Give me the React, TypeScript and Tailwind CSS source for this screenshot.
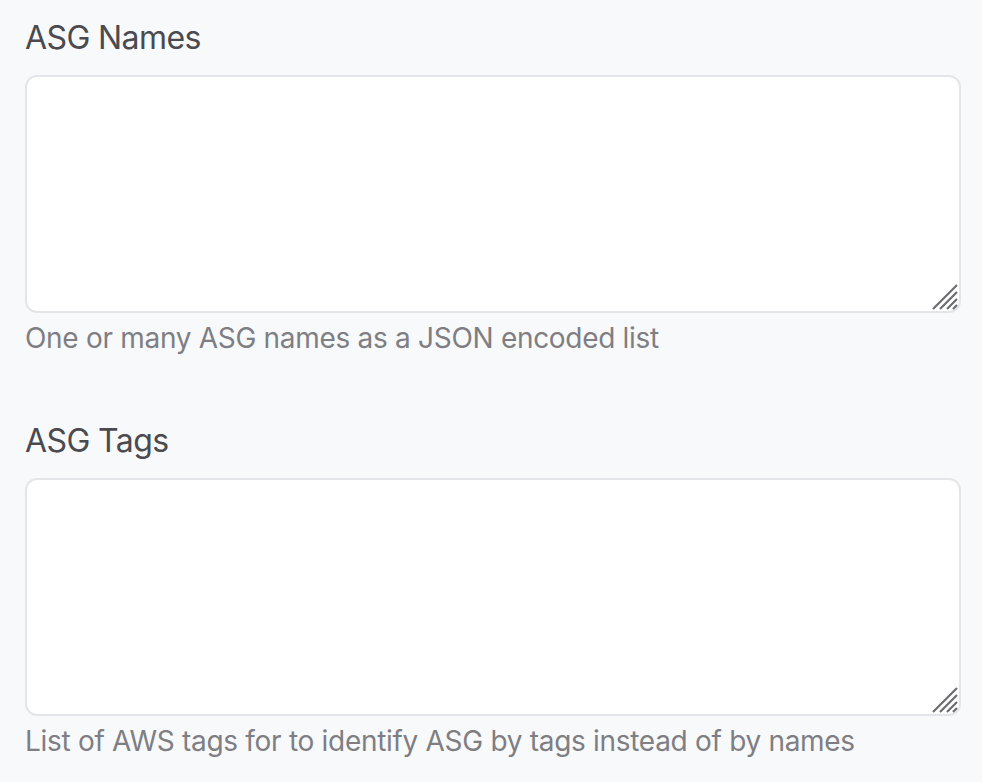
import React from "react";

// resize grip drawn in the bottom-right corner of each textarea
function ResizeGrip() {
    return (
        <svg className="pointer-events-none absolute right-[3px] bottom-[3px]" width="26" height="26" viewBox="0 0 26 26">
            <g stroke="#6b6b6f" strokeWidth="2.2" strokeLinecap="butt">
                <line x1="1" y1="25" x2="25" y2="1" />
                <line x1="8" y1="25" x2="25" y2="8" />
                <line x1="15" y1="25" x2="25" y2="15" />
                <line x1="21" y1="25" x2="25" y2="21" />
            </g>
        </svg>
    );
}

function TextField({ label, help }: { label: string; help: string }) {
    return (
        <div className="flex flex-col">
            <label className="text-[32px] leading-[40px] tracking-[-0.6px] text-[#4a4a4f] mb-[17px]">{label}</label>
            <div className="relative">
                <textarea className="block w-full h-[238px] resize-none rounded-[12px] border-2 border-[#e4e5e9] bg-white outline-none" />
                <ResizeGrip />
            </div>
            <p className="mt-[7px] text-[28px] leading-[36px] tracking-[-0.3px] text-[#7e7e83]">{help}</p>
        </div>
    );
}

export default function App() {
    return (
        <div className="min-h-screen w-full bg-[#f8f9fb] pl-[25px] pr-[21px] pt-[18px]" style={{ fontFamily: 'Inter, "Liberation Sans", Arial, sans-serif' }}>
            <div className="flex flex-col gap-[65px]">
                <TextField label="ASG Names" help="One or many ASG names as a JSON encoded list" />
                <TextField label="ASG Tags" help="List of AWS tags for to identify ASG by tags instead of by names" />
            </div>
        </div>
    );
}
